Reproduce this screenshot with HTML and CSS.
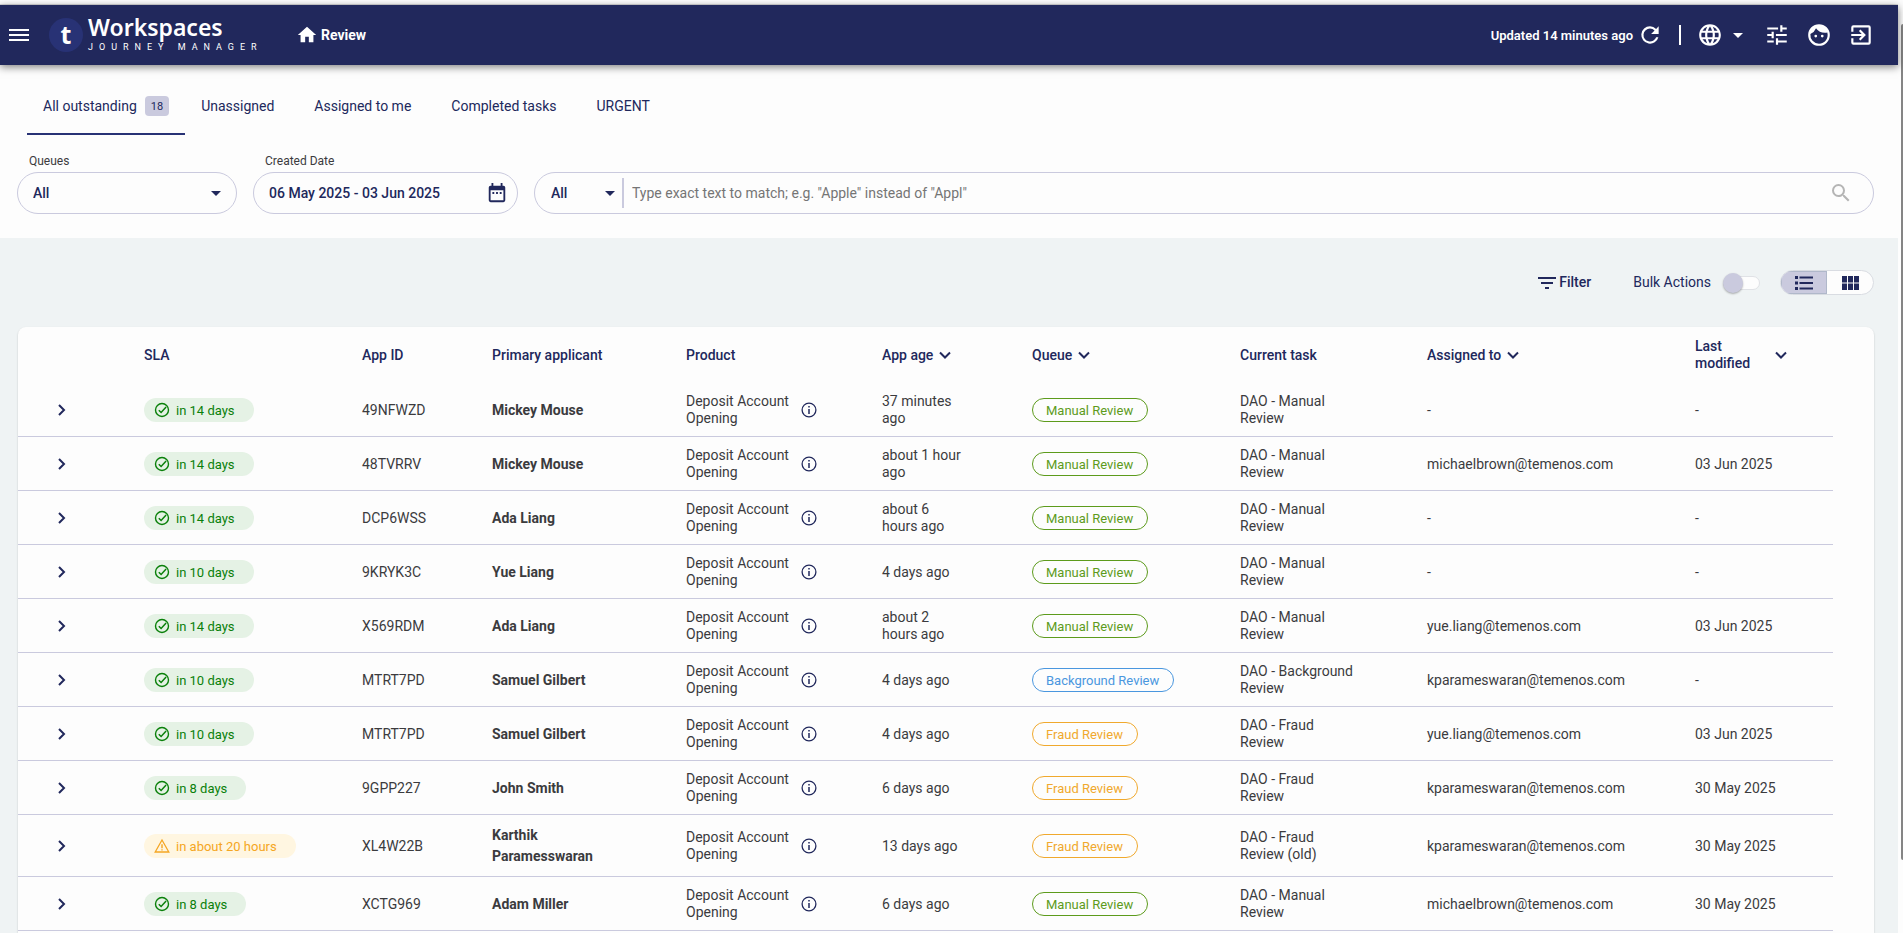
FILE: index.html
```html
<!DOCTYPE html>
<html lang="en">
<head>
    <meta charset="UTF-8">
    <meta name="viewport" content="width=device-width, initial-scale=1.0">
    <title>Workspaces - Review</title>
    <link rel="stylesheet" href="styles.css">
</head>
<body>
    <!-- Shared icons -->
    <svg class="sprite" aria-hidden="true">
        <symbol id="icon-check" viewBox="0 0 16 16">
            <circle cx="8" cy="8" r="6.5" fill="none" stroke="currentColor" stroke-width="1.4"/>
            <path d="M4.8 8.2l2.3 2.3 5-5.4" fill="none" stroke="currentColor" stroke-width="1.5"/>
        </symbol>
        <symbol id="icon-warning" viewBox="0 0 16 16">
            <path d="M8 2L1.2 14h13.6z" fill="none" stroke="currentColor" stroke-width="1.3"/>
            <path d="M8 6.3v4M8 11.2v1.4" stroke="currentColor" stroke-width="1.4"/>
        </symbol>
        <symbol id="icon-info" viewBox="0 0 16 16">
            <circle cx="8" cy="8" r="6.9" fill="none" stroke="currentColor" stroke-width="1.3"/>
            <path d="M8 7v5M8 4v1.6" stroke="currentColor" stroke-width="1.5"/>
        </symbol>
        <symbol id="icon-right" viewBox="0 0 12 12">
            <path d="M3 1l5 5-5 5" fill="none" stroke="currentColor" stroke-width="2"/>
        </symbol>
        <symbol id="icon-down" viewBox="0 0 12 12">
            <path d="M1 3.5l5 5 5-5" fill="none" stroke="currentColor" stroke-width="2"/>
        </symbol>
    </svg>

    <div class="app">
        <header class="header">
            <button class="icon-btn menu-btn" aria-label="Menu">
                <svg width="24" height="24" viewBox="0 0 24 24"><path d="M2 6h20v2H2zM2 11h20v2H2zM2 16h20v2H2z" fill="currentColor"/></svg>
            </button>
            <a href="#" class="logo">
                <span class="logo-mark">t</span>
                <span class="logo-text">
                    <span class="logo-name">Workspaces</span>
                    <span class="logo-sub">JOURNEY MANAGER</span>
                </span>
            </a>
            <a href="#" class="home-link">
                <svg width="22" height="22" viewBox="0 0 24 24"><path d="M10 20v-6h4v6h5v-8h3L12 3 2 12h3v8z" fill="currentColor"/></svg>
                Review
            </a>
            <div class="header-right">
                <span class="updated">Updated 14 minutes ago</span>
                <button class="icon-btn" aria-label="Refresh">
                    <svg width="26" height="26" viewBox="0 0 24 24"><path d="M17.65 6.35A7.96 7.96 0 0 0 12 4a8 8 0 1 0 7.73 10h-2.08A6 6 0 1 1 12 6c1.66 0 3.14.69 4.22 1.78L13 11h7V4z" fill="currentColor"/></svg>
                </button>
                <span class="header-divider"></span>
                <button class="icon-btn language" aria-label="Language">
                    <svg width="26" height="26" viewBox="0 0 24 24"><path d="M11.99 2C6.47 2 2 6.48 2 12s4.47 10 9.99 10C17.52 22 22 17.52 22 12S17.52 2 11.99 2zm6.93 6h-2.95a15.65 15.65 0 0 0-1.38-3.56A8.03 8.03 0 0 1 18.92 8zM12 4.04c.83 1.2 1.48 2.53 1.91 3.96h-3.82c.43-1.43 1.08-2.76 1.91-3.96zM4.26 14C4.1 13.36 4 12.69 4 12s.1-1.36.26-2h3.38c-.08.66-.14 1.32-.14 2s.06 1.34.14 2H4.26zm.82 2h2.95c.32 1.25.78 2.45 1.38 3.56A7.987 7.987 0 0 1 5.08 16zm2.95-8H5.08a7.987 7.987 0 0 1 4.33-3.56A15.65 15.65 0 0 0 8.03 8zM12 19.96c-.83-1.2-1.48-2.53-1.91-3.96h3.82c-.43 1.43-1.08 2.76-1.91 3.96zM14.34 14H9.66c-.09-.66-.16-1.32-.16-2s.07-1.35.16-2h4.68c.09.65.16 1.32.16 2s-.07 1.34-.16 2zm.25 5.56c.6-1.11 1.06-2.31 1.38-3.56h2.95a8.03 8.03 0 0 1-4.33 3.56zM16.36 14c.08-.66.14-1.32.14-2s-.06-1.34-.14-2h3.38c.16.64.26 1.31.26 2s-.1 1.36-.26 2h-3.38z" fill="currentColor"/></svg>
                    <span class="caret"></span>
                </button>
                <button class="icon-btn" aria-label="Preferences">
                    <svg width="26" height="26" viewBox="0 0 24 24"><path d="M3 17v2h6v-2H3zM3 5v2h10V5H3zm10 16v-2h8v-2h-8v-2h-2v6h2zM7 9v2H3v2h4v2h2V9H7zm14 4v-2H11v2h10zm-6-4h2V7h4V5h-4V3h-2v6z" fill="currentColor"/></svg>
                </button>
                <button class="icon-btn" aria-label="Profile">
                    <svg width="26" height="26" viewBox="0 0 24 24"><path d="M9 11.75a1.25 1.25 0 1 0 0 2.5 1.25 1.25 0 0 0 0-2.5zm6 0a1.25 1.25 0 1 0 0 2.5 1.25 1.25 0 0 0 0-2.5zM12 2a10 10 0 1 0 0 20 10 10 0 0 0 0-20zm0 18a8 8 0 0 1-7.95-8.86 10.05 10.05 0 0 0 5.21-5.37A9.97 9.97 0 0 0 17.42 10c.78 0 1.53-.09 2.25-.26A8 8 0 0 1 12 20z" fill="currentColor"/></svg>
                </button>
                <button class="icon-btn" aria-label="Log out">
                    <svg width="26" height="26" viewBox="0 0 24 24"><path d="M10.09 15.59L11.5 17l5-5-5-5-1.41 1.41L12.67 11H3v2h9.67l-2.58 2.59zM19 3H5a2 2 0 0 0-2 2v4h2V5h14v14H5v-4H3v4a2 2 0 0 0 2 2h14a2 2 0 0 0 2-2V5a2 2 0 0 0-2-2z" fill="currentColor"/></svg>
                </button>
            </div>
        </header>

        <section class="top">
            <nav class="tabs">
                <a href="#" class="tab active">All outstanding <span class="badge">18</span></a>
                <a href="#" class="tab">Unassigned</a>
                <a href="#" class="tab">Assigned to me</a>
                <a href="#" class="tab">Completed tasks</a>
                <a href="#" class="tab">URGENT</a>
            </nav>

            <form class="filters">
                <div class="field field-queue">
                    <label for="queue">Queues</label>
                    <div class="box select-box">
                        <select id="queue"><option>All</option></select>
                        <span class="caret"></span>
                    </div>
                </div>
                <div class="field field-date">
                    <label for="created">Created Date</label>
                    <div class="box date-box">
                        <input type="text" id="created" value="06 May 2025 - 03 Jun 2025">
                        <button type="button" class="icon-btn" aria-label="Pick dates">
                            <svg width="22" height="22" viewBox="0 0 24 24"><path d="M9 11H7v2h2v-2zm4 0h-2v2h2v-2zm4 0h-2v2h2v-2zm2-7h-1V1h-2v3H8V1H6v3H5a2 2 0 0 0-2 2v14a2 2 0 0 0 2 2h14a2 2 0 0 0 2-2V6a2 2 0 0 0-2-2zm0 16H5V9h14v11z" fill="currentColor"/></svg>
                        </button>
                    </div>
                </div>
                <div class="box search-box">
                    <div class="select-box search-type">
                        <select aria-label="Search in"><option>All</option></select>
                        <span class="caret"></span>
                    </div>
                    <input type="text" aria-label="Search" placeholder="Type exact text to match; e.g. &quot;Apple&quot; instead of &quot;Appl&quot;">
                    <button type="button" class="icon-btn search-btn" aria-label="Search">
                        <svg width="24" height="24" viewBox="0 0 24 24"><path d="M15.5 14h-.79l-.28-.27A6.471 6.471 0 0 0 16 9.5 6.5 6.5 0 1 0 9.5 16c1.61 0 3.09-.59 4.23-1.57l.27.28v.79l5 4.99L20.49 19l-4.99-5zm-6 0C7.01 14 5 11.99 5 9.5S7.01 5 9.5 5 14 7.01 14 9.5 11.99 14 9.5 14z" fill="currentColor"/></svg>
                    </button>
                </div>
            </form>
        </section>

        <main class="content">
            <div class="toolbar">
                <button class="filter-btn">
                    <svg width="18" height="12" viewBox="0 0 18 12"><path d="M0 0h18v2H0zM3 5h12v2H3zM7 10h4v2H7z" fill="currentColor"/></svg>
                    Filter
                </button>
                <label class="bulk">Bulk Actions <input type="checkbox" class="switch"></label>
                <div class="view-toggle">
                    <button class="active" aria-label="List view">
                        <svg width="18" height="14" viewBox="0 0 18 14"><path d="M0 0h3v3H0zM0 5.500h3v3H0zM0 11h3v3H0zM4.500 .5h13.500v2H4.500zM4.500 6h13.500v2H4.500zM4.500 11.500h13.500v2H4.500z" fill="currentColor"/></svg>
                    </button>
                    <button aria-label="Grid view">
                        <svg width="17" height="14" viewBox="0 0 17 14"><path d="M0 0h5v6.500H0zM6 0h5v6.500H6zM12 0h5v6.500h-5zM0 7.500h5V14H0zM6 7.500h5V14H6zM12 7.500h5V14h-5z" fill="currentColor"/></svg>
                    </button>
                </div>
            </div>

            <div class="card">
                <table>
                    <colgroup>
                        <col class="c-expand"><col class="c-sla"><col class="c-id"><col class="c-name"><col class="c-product">
                        <col class="c-age"><col class="c-queue"><col class="c-task"><col class="c-assigned"><col class="c-modified">
                    </colgroup>
                    <thead>
                        <tr>
                            <th></th>
                            <th>SLA</th>
                            <th>App ID</th>
                            <th>Primary applicant</th>
                            <th>Product</th>
                            <th><button class="sort">App age <svg class="down"><use href="#icon-down"/></svg></button></th>
                            <th><button class="sort">Queue <svg class="down"><use href="#icon-down"/></svg></button></th>
                            <th>Current task</th>
                            <th><button class="sort">Assigned to <svg class="down"><use href="#icon-down"/></svg></button></th>
                            <th><button class="sort sort-modified"><span>Last modified</span> <svg class="down"><use href="#icon-down"/></svg></button></th>
                        </tr>
                    </thead>
                    <tbody id="rows"></tbody>
                </table>
            </div>
        </main>
    </div>
    <div class="scrollbar" aria-hidden="true"><div class="thumb"></div></div>

    <script>
        const rows = [
            ['in 14 days', '49NFWZD', 'Mickey Mouse', '37 minutes ago', 'Manual', 'Manual Review', '-', '-'],
            ['in 14 days', '48TVRRV', 'Mickey Mouse', 'about 1 hour ago', 'Manual', 'Manual Review', 'michaelbrown@temenos.com', '03 Jun 2025'],
            ['in 14 days', 'DCP6WSS', 'Ada Liang', 'about 6 hours ago', 'Manual', 'Manual Review', '-', '-'],
            ['in 10 days', '9KRYK3C', 'Yue Liang', '4 days ago', 'Manual', 'Manual Review', '-', '-'],
            ['in 14 days', 'X569RDM', 'Ada Liang', 'about 2 hours ago', 'Manual', 'Manual Review', 'yue.liang@temenos.com', '03 Jun 2025'],
            ['in 10 days', 'MTRT7PD', 'Samuel Gilbert', '4 days ago', 'Background', 'Background Review', 'kparameswaran@temenos.com', '-'],
            ['in 10 days', 'MTRT7PD', 'Samuel Gilbert', '4 days ago', 'Fraud', 'Fraud Review', 'yue.liang@temenos.com', '03 Jun 2025'],
            ['in 8 days', '9GPP227', 'John Smith', '6 days ago', 'Fraud', 'Fraud Review', 'kparameswaran@temenos.com', '30 May 2025'],
            ['in about 20 hours', 'XL4W22B', 'Karthik Paramesswaran', '13 days ago', 'Fraud', 'Fraud Review (old)', 'kparameswaran@temenos.com', '30 May 2025'],
            ['in 8 days', 'XCTG969', 'Adam Miller', '6 days ago', 'Manual', 'Manual Review', 'michaelbrown@temenos.com', '30 May 2025']
        ];

        document.getElementById('rows').innerHTML = rows.map(([sla, id, name, age, queue, task, assigned, modified]) => {
            const late = sla.includes('hours');
            return `
                <tr>
                    <td class="expand"><button class="icon-btn" aria-label="Expand row"><svg width="12" height="12"><use href="#icon-right"/></svg></button></td>
                    <td><span class="sla ${late ? 'sla-warning' : ''}"><svg width="16" height="16"><use href="#icon-${late ? 'warning' : 'check'}"/></svg>${sla}</span></td>
                    <td>${id}</td>
                    <td class="name">${name}</td>
                    <td><div class="product"><span>Deposit Account Opening</span><svg width="16" height="16"><use href="#icon-info"/></svg></div></td>
                    <td class="age">${age}</td>
                    <td><span class="queue queue-${queue.toLowerCase()}">${queue} Review</span></td>
                    <td class="task">DAO - ${task}</td>
                    <td>${assigned}</td>
                    <td>${modified}</td>
                </tr>`;
        }).join('');
    </script>
</body>
</html>
```
FILE: styles.css
```css
* {
    margin: 0;
    padding: 0;
    box-sizing: border-box;
}

body {
    display: flex;
    height: 100vh;
    overflow: hidden;
    font-family: Roboto, "Liberation Sans", sans-serif;
    font-size: 14px;
    line-height: 17px;
    color: #3b3b3e;
    background: #fdfdfd;
}

button,
input,
select {
    font: inherit;
    color: inherit;
    background: none;
    border: none;
    outline: none;
}

button {
    cursor: pointer;
}

a {
    color: inherit;
    text-decoration: none;
}

svg {
    display: block;
    flex-shrink: 0;
}

.sprite {
    display: none;
}

.app {
    flex: 1;
    min-width: 0;
    display: flex;
    flex-direction: column;
    margin-top: 4px;
    border-top: 1px solid #dcdcdc;
}

/* Header */
.header {
    position: relative;
    display: flex;
    align-items: center;
    height: 60px;
    flex-shrink: 0;
    padding: 0 24px 0 7px;
    color: #fff;
    background: #21285c;
    box-shadow: 0 2px 8px rgba(0,0,0,0.5);
}

.icon-btn {
    display: flex;
    align-items: center;
}

.logo {
    display: flex;
    align-items: center;
    gap: 5px;
    margin-left: 18px;
}

.logo-mark {
    width: 34px;
    height: 34px;
    border-radius: 50%;
    background: #283275;
    font: bold 25px/32px "Noto Sans", sans-serif;
    text-align: center;
}

.logo-text {
    display: flex;
    flex-direction: column;
    gap: 3px;
    width: 180px;
    padding-bottom: 3px;
}

.logo-name {
    font: 600 23px/24px "Noto Sans", sans-serif;
}

.logo-sub {
    font-size: 9px;
    line-height: 11px;
    letter-spacing: 6px;
    white-space: nowrap;
}

.home-link {
    display: flex;
    align-items: center;
    gap: 3px;
    margin-left: 28px;
    font-size: 14px;
    font-weight: 700;
}

.header-right {
    display: flex;
    align-items: center;
    gap: 16px;
    margin-left: auto;
}

.updated {
    margin-right: -12px;
    font-size: 13px;
    font-weight: 600;
}

.header-divider {
    width: 2px;
    height: 20px;
    background: #fff;
}

.language {
    gap: 10px;
    margin-right: 5px;
}

.caret {
    border: 5px solid transparent;
    border-top-color: currentColor;
    border-bottom: none;
}

/* Tabs and search */
.top {
    padding: 16px 24px 24px 17px;
    color: #21285c;
}

.tabs {
    display: flex;
    margin-left: 10px;
}

.tab {
    display: flex;
    align-items: center;
    height: 54px;
    padding: 0 24px 2px 16px;
    border-bottom: 2px solid transparent;
}

.tab.active {
    padding-right: 16px;
    border-color: #283275;
}

.badge {
    margin-left: 8px;
    padding: 2px 6px 0;
    border-radius: 4px;
    background: #cacade;
    font-size: 11px;
    line-height: 18px;
}

.filters {
    display: flex;
    align-items: flex-end;
    gap: 16px;
    margin-top: 18px;
}

.field label {
    display: block;
    margin: 0 12px 3px;
    font-size: 12px;
    line-height: 16px;
    color: #3b3b3e;
}

.field-queue {
    width: 220px;
}

.field-date {
    width: 265px;
}

.box {
    display: flex;
    align-items: center;
    height: 42px;
    border: 1px solid #cacade;
    border-radius: 21px;
    font-weight: 500;
}

.select-box {
    display: flex;
    align-items: center;
    padding: 0 15px;
}

.select-box select {
    flex: 1;
    min-width: 0;
    height: 38px;
    appearance: none;
}

.date-box {
    padding: 0 9px 0 15px;
}

.date-box input {
    flex: 1;
    min-width: 0;
}

.search-box {
    flex: 1;
    font-weight: 400;
}

.search-type {
    width: 89px;
    height: 30px;
    padding: 0 7px 0 16px;
    border-right: 2px solid #cacade;
    font-weight: 500;
}

.search-box input {
    flex: 1;
    padding: 0 8px;
}

.search-box input::placeholder {
    color: #757575;
}

.search-btn {
    margin-right: 20px;
    color: #b5b5b5;
}

/* Task list */
.content {
    flex: 1;
    display: flex;
    flex-direction: column;
    padding: 32px 24px 0 18px;
    background: #eff3f4;
}

.toolbar {
    display: flex;
    align-items: center;
    justify-content: flex-end;
    color: #21285c;
}

.filter-btn {
    display: flex;
    align-items: center;
    gap: 3px;
    font-weight: 500;
}

.bulk {
    display: flex;
    align-items: center;
    gap: 12px;
    margin: 0 20px 0 42px;
}

.switch {
    position: relative;
    width: 37px;
    height: 14px;
    appearance: none;
    border: 1px solid #e0e2e6;
    border-radius: 7px;
    background: #fdfdfd;
}

.switch::before {
    content: "";
    position: absolute;
    top: -4px;
    left: -1px;
    width: 20px;
    height: 20px;
    border-radius: 50%;
    background: #cacade;
    box-shadow: 0 1px 2px rgba(0,0,0,0.3);
}

.switch:checked::before {
    left: 17px;
}

.view-toggle {
    display: flex;
    width: 94px;
    height: 25px;
    border: 1px solid #d9dce2;
    border-radius: 13px;
    overflow: hidden;
    background: #fdfdfd;
}

.view-toggle button {
    flex: 1;
    display: flex;
    align-items: center;
    justify-content: center;
}

.view-toggle .active {
    background: #cacade;
    box-shadow: inset 0 0 0 1px #b0b8ca;
}

.card {
    flex: 1;
    margin-top: 32px;
    padding-right: 41px;
    border-radius: 8px 8px 0 0;
    background: #fdfdfd;
    box-shadow: 0 1px 2px rgba(0,0,0,0.2);
}

table {
    width: 100%;
    table-layout: fixed;
    border-collapse: separate;
    border-spacing: 0;
}

.c-expand { width: 126px; }
.c-sla { width: 218px; }
.c-id { width: 130px; }
.c-name { width: 194px; }
.c-product { width: 196px; }
.c-age { width: 150px; }
.c-queue { width: 208px; }
.c-task { width: 187px; }
.c-assigned { width: 268px; }
.c-modified { width: 138px; }

th {
    height: 56px;
    text-align: left;
    font-weight: 500;
    color: #21285c;
}

td {
    padding: 10px 0 9px;
    border-bottom: 1px solid #cacade;
    vertical-align: middle;
}

.sort {
    display: flex;
    align-items: center;
    gap: 6px;
    text-align: left;
}

.down {
    width: 12px;
    height: 12px;
}

.sort-modified {
    gap: 22px;
}

.sort-modified span {
    width: 58px;
}

.expand .icon-btn {
    margin-left: 38px;
    color: #21285c;
}

.sla {
    display: inline-flex;
    align-items: center;
    gap: 6px;
    height: 24px;
    padding: 0 19px 0 10px;
    border-radius: 12px;
    background: #e5f2e5;
    font-size: 13px;
    color: #0a800a;
}

.sla-warning {
    background: #fff6e1;
    color: #f5a623;
}

.name {
    padding-right: 60px;
    font-weight: 700;
    line-height: 21px;
}

.product {
    display: flex;
    align-items: center;
    color: #3b3b3e;
}

.product span {
    width: 115px;
}

.product svg {
    color: #21285c;
}

.age {
    padding-right: 67px;
}

.task {
    padding-right: 66px;
}

.queue {
    display: inline-flex;
    align-items: center;
    height: 24px;
    padding: 0 14px 0 13px;
    border: 1px solid;
    border-radius: 12px;
    font-size: 13px;
}

.queue-manual { color: #5d9b1c; }
.queue-background { color: #4a97df; }
.queue-fraud { color: #f0a92d; }

/* Page scrollbar */
.scrollbar {
    width: 5px;
    padding: 24px 0 0 3px;
    flex-shrink: 0;
}

.thumb {
    height: 92%;
    border-radius: 2px 0 0 2px;
    background: #858585;
}
```
